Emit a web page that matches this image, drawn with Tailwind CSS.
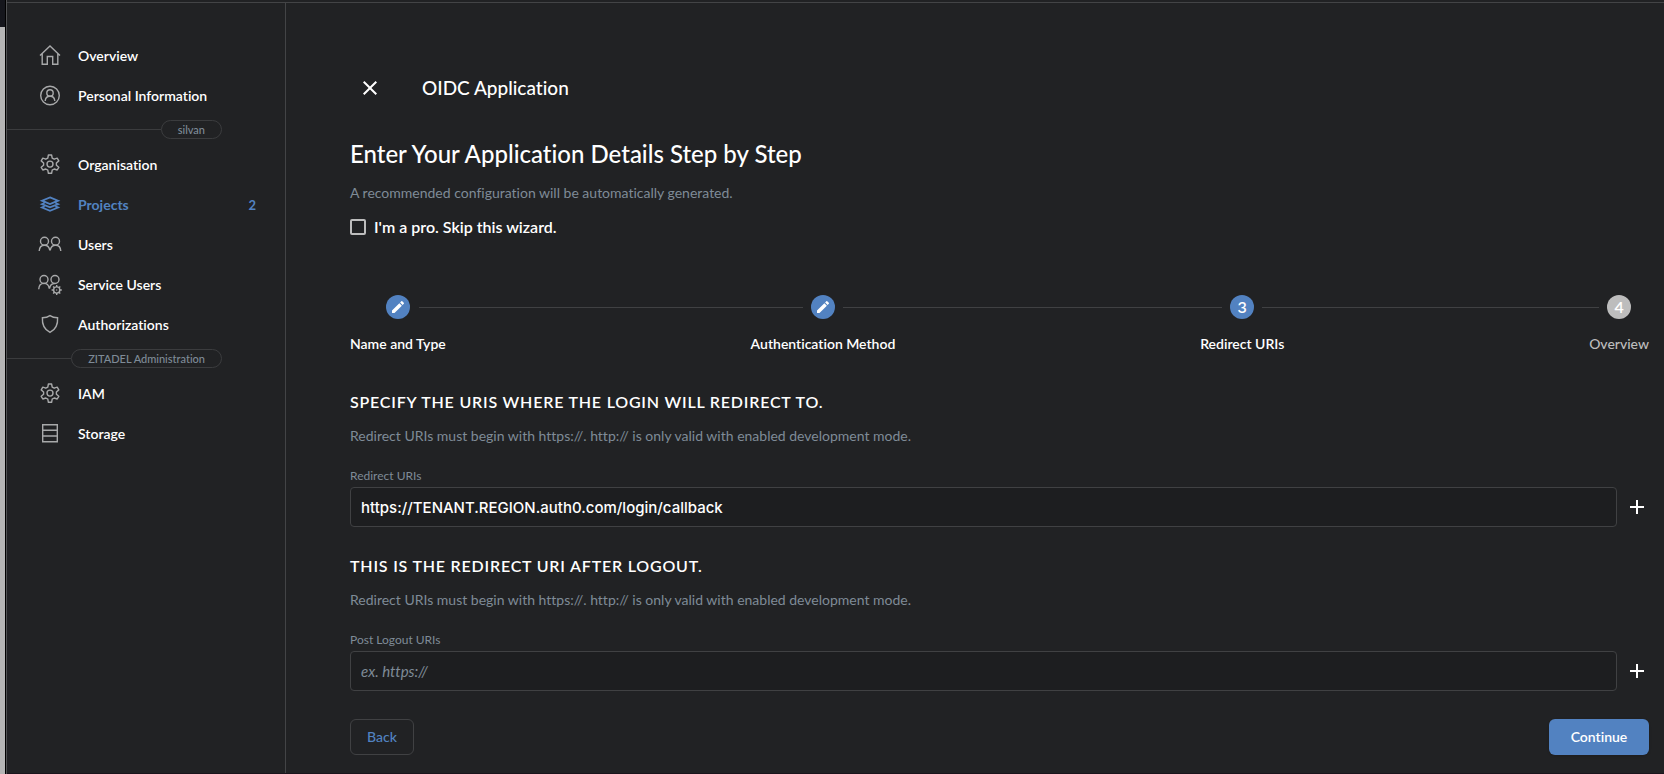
<!DOCTYPE html>
<html lang="en">
<head>
<meta charset="utf-8">
<meta name="viewport" content="width=device-width, initial-scale=1">
<title>OIDC Application</title>
<script src="https://cdn.jsdelivr.net/npm/@tailwindcss/browser@4"></script>
</head>
<body class="flex min-h-screen bg-[#212224] font-['Lato',sans-serif] text-sm text-white [font-variant-ligatures:none]">
  <!-- window edge -->
  <div class="flex w-[7px] shrink-0 flex-col border-r border-[#505153]">
    <div class="h-[27px] border-r border-black bg-[#15161c]"></div>
    <div class="grow border-r border-black bg-[#b5b5b5]"></div>
  </div>
  <div class="flex min-w-0 grow flex-col border-b border-[#1a141c]">
    <div class="h-[3px] shrink-0 border-b border-[#434446]"></div>
    <div class="flex grow">
      <aside class="w-[279px] shrink-0 border-r border-[#434446] pt-[33px]">
        <nav class="flex flex-col font-semibold">
          <a href="#" class="flex h-10 items-center gap-4 pr-[29px] pl-[31px]">
            <svg class="size-6 text-[#a8a9aa]" viewBox="0 0 24 24" fill="none" stroke="currentColor" stroke-width="1.4"><path d="M2 11.500 12 2l10 9.500M4.200 9.800V20.300H9.300V12.500h5.400v7.800h5.100V9.800"/></svg>
            <span>Overview</span>
          </a>
          <a href="#" class="flex h-10 items-center gap-4 pr-[29px] pl-[31px]">
            <svg class="size-6 text-[#a8a9aa]" viewBox="0 0 24 24" fill="none" stroke="currentColor" stroke-width="1.4"><circle cx="12" cy="11.500" r="9.300"/><circle cx="12" cy="9" r="3.200"/><path d="M7.200 17c.2-2.800 2.200-4.800 4.800-4.800s4.600 2 4.800 4.800"/></svg>
            <span>Personal Information</span>
          </a>
          <div class="mt-1 mb-1.5 flex h-[19px] items-center pr-[63px] font-medium text-[#7f8b97]">
            <div class="h-px grow bg-[#3b3c3e]"></div>
            <div class="flex h-[19px] items-center rounded-full border border-[#3b3c3e] px-4 text-[11px]">silvan</div>
          </div>
          <a href="#" class="flex h-10 items-center gap-4 pr-[29px] pl-[31px]">
            <svg class="size-6 text-[#a8a9aa]" viewBox="0 0 24 24" fill="none" stroke="currentColor" stroke-width="1.4" stroke-linejoin="round"><path d="M10.400 2h3.200l.6 3.100 2 1.100 3-1 1.600 2.700-2.400 2.100v2.200l2.400 2.100-1.600 2.700-3-1-2 1.100-.6 3.200h-3.200l-.6-3.200-2-1.100-3 1-1.600-2.700 2.400-2.100V10L3.200 7.900l1.600-2.700 3 1 2-1.100z"/><circle cx="12" cy="11.100" r="3"/></svg>
            <span>Organisation</span>
          </a>
          <a href="#" class="flex h-10 items-center gap-4 pr-[29px] pl-[31px] font-bold text-[#5282c1]">
            <svg class="size-6" viewBox="0 0 24 24" fill="none" stroke="currentColor" stroke-width="1.800"><path d="m12 4.400 8 3.300-8 3.300-8-3.300zM6.500 10 4 11.100l8 3.300 8-3.300-2.500-1.100M6.500 13.400 4 14.500l8 3.300 8-3.300-2.500-1.100"/></svg>
            <span class="grow">Projects</span>
            <span class="text-[13px]">2</span>
          </a>
          <a href="#" class="flex h-10 items-center gap-4 pr-[29px] pl-[31px]">
            <svg class="size-6 text-[#a8a9aa]" viewBox="0 0 24 24" fill="none" stroke="currentColor" stroke-width="1.400"><circle cx="6.500" cy="8.300" r="4"/><circle cx="17.500" cy="8.300" r="4"/><path d="M1.200 18c.2-3.600 2.400-5.800 5.300-5.800 2.600 0 4.600 1.600 5.200 4.600h.6c.6-3 2.600-4.600 5.200-4.600 2.900 0 5.100 2.200 5.300 5.800"/></svg>
            <span>Users</span>
          </a>
          <a href="#" class="flex h-10 items-center gap-4 pr-[29px] pl-[31px]">
            <svg class="size-6 overflow-visible text-[#a8a9aa]" viewBox="0 0 24 24" fill="none" stroke="currentColor" stroke-width="1.400"><circle cx="6" cy="6.500" r="4"/><circle cx="17" cy="6.500" r="4"/><path d="M.7 16.200c.2-3.600 2.400-5.800 5.300-5.800 2.600 0 4.600 1.600 5.200 4.600h.4c.6-2.800 2.400-4.400 4.900-4.500"/><circle cx="18.700" cy="17" r="3.100"/><circle cx="18.700" cy="17" r=".7" fill="currentColor" stroke="none"/><path d="M18.700 13.900v-2M18.700 20.100v2M15.600 17h-2M21.800 17h2M16.500 14.800l-1.400-1.400M20.900 19.200l1.400 1.400M16.500 19.200l-1.400 1.400M20.900 14.800l1.400-1.400"/></svg>
            <span>Service Users</span>
          </a>
          <a href="#" class="flex h-10 items-center gap-4 pr-[29px] pl-[31px]">
            <svg class="size-6 text-[#a8a9aa]" viewBox="0 0 24 24" fill="none" stroke="currentColor" stroke-width="1.400"><path d="M12 2.600c-2.200 1.500-4.600 2.100-7.600 2.200-.4 6.200 1.200 11.500 7.600 14.600 6.400-3.100 8-8.400 7.600-14.600-3-.1-5.400-.7-7.600-2.200z"/></svg>
            <span>Authorizations</span>
          </a>
          <div class="mt-1 mb-1.5 flex h-[19px] items-center pr-[63px] font-medium text-[#7f8b97]">
            <div class="h-px grow bg-[#3b3c3e]"></div>
            <div class="flex h-[19px] items-center rounded-full border border-[#3b3c3e] px-4 text-[11px]">ZITADEL Administration</div>
          </div>
          <a href="#" class="flex h-10 items-center gap-4 pr-[29px] pl-[31px]">
            <svg class="size-6 text-[#a8a9aa]" viewBox="0 0 24 24" fill="none" stroke="currentColor" stroke-width="1.4" stroke-linejoin="round"><path d="M10.400 2h3.200l.6 3.100 2 1.100 3-1 1.600 2.700-2.400 2.100v2.200l2.400 2.100-1.600 2.700-3-1-2 1.100-.6 3.200h-3.200l-.6-3.200-2-1.100-3 1-1.600-2.700 2.400-2.100V10L3.200 7.900l1.600-2.700 3 1 2-1.100z"/><circle cx="12" cy="11.100" r="3"/></svg>
            <span>IAM</span>
          </a>
          <a href="#" class="flex h-10 items-center gap-4 pr-[29px] pl-[31px]">
            <svg class="size-6 text-[#a8a9aa]" viewBox="0 0 24 24" fill="none" stroke="currentColor" stroke-width="1.4"><path d="M4.700 2.700h14.600v17H4.700zM4.700 8.300h14.600M4.700 14h14.600"/></svg>
            <span>Storage</span>
          </a>
        </nav>
      </aside>

      <main class="min-w-0 grow pt-[65px] pr-[15px] pl-16">
        <header class="flex h-10 items-center gap-8">
          <button type="button" aria-label="Close" class="flex size-10 items-center justify-center">
            <svg class="size-6" viewBox="0 0 24 24" fill="currentColor"><path d="M19 6.410 17.590 5 12 10.590 6.410 5 5 6.410 10.590 12 5 17.590 6.410 19 12 13.410 17.590 19 19 17.590 13.410 12z"/></svg>
          </button>
          <p class="text-[19px] leading-6 font-medium">OIDC Application</p>
        </header>
        <h1 class="mt-[30px] text-2xl font-medium">Enter Your Application Details Step by Step</h1>
        <p class="mt-[13px] text-[#7f8b97]">A recommended configuration will be automatically generated.</p>
        <label class="mt-3 flex w-fit items-center gap-2 text-base font-semibold">
          <input type="checkbox" class="size-4 appearance-none rounded-[2px] border-2 border-[#bdbdbd]">
          I'm a pro. Skip this wizard.
        </label>

        <ol class="mt-14 flex font-semibold">
          <li class="flex flex-col items-center gap-[15px]">
            <span class="flex size-6 items-center justify-center rounded-full bg-[#5282c1]"><svg class="size-4" viewBox="0 0 24 24" fill="currentColor"><path d="M3 17.250V21h3.750L17.810 9.940l-3.750-3.750L3 17.250zM20.710 7.040a1 1 0 0 0 0-1.410l-2.340-2.340a1 1 0 0 0-1.410 0l-1.830 1.830 3.750 3.750 1.830-1.830z"/></svg></span>
            <span>Name and Type</span>
          </li>
          <li aria-hidden="true" class="grow pt-3"><div class="-mr-[52px] -ml-[27px] h-px bg-[#404143]"></div></li>
          <li class="flex flex-col items-center gap-[15px]">
            <span class="flex size-6 items-center justify-center rounded-full bg-[#5282c1]"><svg class="size-4" viewBox="0 0 24 24" fill="currentColor"><path d="M3 17.250V21h3.750L17.810 9.940l-3.750-3.750L3 17.250zM20.710 7.040a1 1 0 0 0 0-1.410l-2.340-2.340a1 1 0 0 0-1.410 0l-1.830 1.830 3.750 3.750 1.830-1.830z"/></svg></span>
            <span>Authentication Method</span>
          </li>
          <li aria-hidden="true" class="grow pt-3"><div class="-mr-[22px] -ml-[52px] h-px bg-[#404143]"></div></li>
          <li class="flex flex-col items-center gap-[15px]">
            <span class="flex size-6 items-center justify-center rounded-full bg-[#5282c1] text-base">3</span>
            <span>Redirect URIs</span>
          </li>
          <li aria-hidden="true" class="grow pt-3"><div class="-mr-[10px] -ml-[22px] h-px bg-[#404143]"></div></li>
          <li class="flex flex-col items-center gap-[15px] font-medium text-[#bdbdbd]">
            <span class="flex size-6 items-center justify-center rounded-full bg-[#bdbdbd] text-base font-semibold text-white">4</span>
            <span>Overview</span>
          </li>
        </ol>

        <form>
          <section>
            <h2 class="mt-9 text-base font-semibold tracking-wider uppercase">Specify the URIs where the login will redirect to.</h2>
            <p class="mt-3 text-[#7f8b97]">Redirect URIs must begin with https://. http:// is only valid with enabled development mode.</p>
            <label for="redirect" class="mt-[22px] block text-xs leading-4 text-[#7f8b97]">Redirect URIs</label>
            <div class="mt-[3px] flex items-center gap-2">
              <input id="redirect" type="text" value="https://TENANT.REGION.auth0.com/login/callback" class="h-10 min-w-0 grow rounded border border-[#404143] bg-[#1d1e20] px-[10px] font-['Inter',sans-serif] text-[15px] font-medium">
              <button type="button" aria-label="Add redirect URI" class="flex h-10 w-6 items-center justify-center"><svg class="size-6" viewBox="0 0 24 24" fill="currentColor"><path d="M19 13h-6v6h-2v-6H5v-2h6V5h2v6h6z"/></svg></button>
            </div>
          </section>
          <section>
            <h2 class="mt-[27px] text-base font-semibold tracking-wider uppercase">This is the redirect URI after logout.</h2>
            <p class="mt-3 text-[#7f8b97]">Redirect URIs must begin with https://. http:// is only valid with enabled development mode.</p>
            <label for="logout" class="mt-[22px] block text-xs leading-4 text-[#7f8b97]">Post Logout URIs</label>
            <div class="mt-[3px] flex items-center gap-2">
              <input id="logout" type="text" placeholder="ex. https://" class="h-10 min-w-0 grow rounded border border-[#404143] bg-[#1d1e20] px-[10px] text-[15px] placeholder:text-[#7f8b97] placeholder:italic">
              <button type="button" aria-label="Add post logout URI" class="flex h-10 w-6 items-center justify-center"><svg class="size-6" viewBox="0 0 24 24" fill="currentColor"><path d="M19 13h-6v6h-2v-6H5v-2h6V5h2v6h6z"/></svg></button>
            </div>
          </section>
          <div class="mt-7 flex justify-between">
            <button type="button" class="h-9 w-16 rounded-md border border-[#404143] font-medium text-[#5282c1]">Back</button>
            <button type="button" class="h-9 w-[100px] rounded-md bg-[#5282c1] font-semibold shadow">Continue</button>
          </div>
        </form>
      </main>
    </div>
  </div>
</body>
</html>
